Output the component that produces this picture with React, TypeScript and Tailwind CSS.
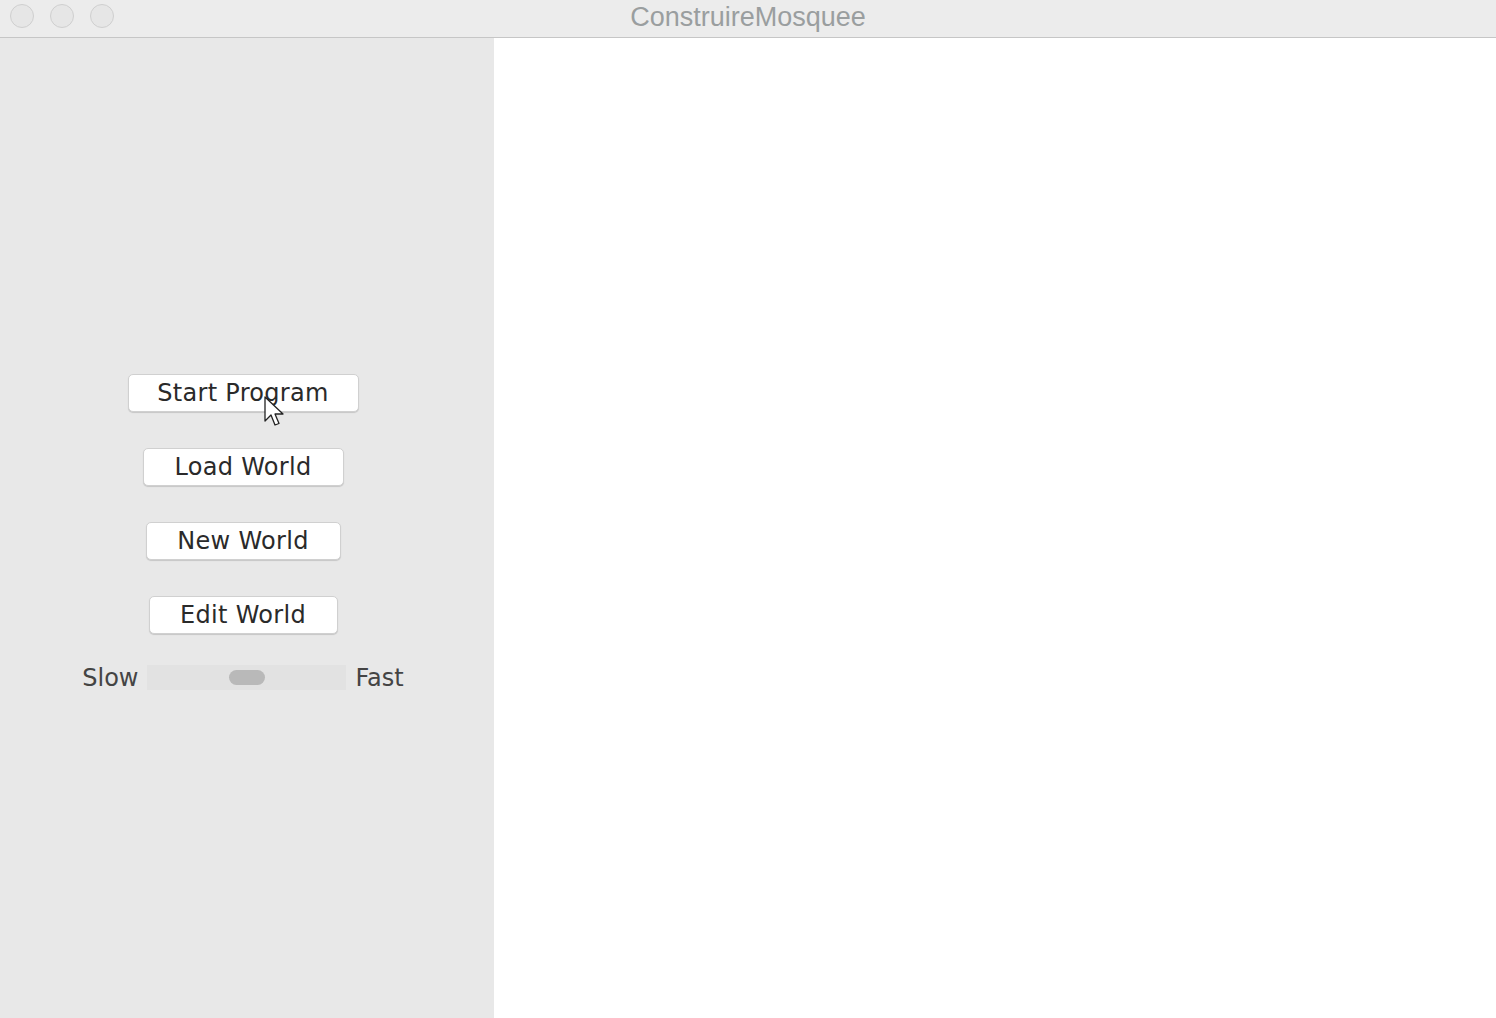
import React from 'react';

const buttons = [
  { label: 'Start Program', width: 'w-[231px]' },
  { label: 'Load World', width: 'w-[201px]' },
  { label: 'New World', width: 'w-[195px]' },
  { label: 'Edit World', width: 'w-[189px]' },
];

function TrafficLight() {
  return <div className="w-[24px] h-[24px] rounded-full bg-[#e6e6e6] border border-[#cfcfcf]" />;
}

export default function App() {
  return (
    <div className="w-[1496px] h-[1018px] flex flex-col bg-white overflow-hidden">
      {/* title bar */}
      <div className="relative h-[38px] shrink-0 flex items-center bg-[#ececec] border-b border-[#c6c6c6]">
        <div className="flex items-center gap-[16px] pl-[10px] pb-[5px]">
          <TrafficLight />
          <TrafficLight />
          <TrafficLight />
        </div>
        <div
          className="absolute inset-0 flex items-center justify-center text-[27px] text-[#9a9e9f] pb-[2px]"
          style={{ fontFamily: '"Liberation Sans", Arial, sans-serif' }}
        >
          ConstruireMosquee
        </div>
      </div>

      <div className="flex flex-1">
        {/* sidebar */}
        <div
          className="relative w-[494px] bg-[#e8e8e8] flex flex-col items-center pt-[336px] pr-[8px]"
          style={{ fontFamily: '"DejaVu Sans", Verdana, sans-serif' }}
        >
          <div className="flex flex-col items-center gap-[36px]">
            {buttons.map((b) => (
              <button
                key={b.label}
                className={`${b.width} h-[38px] bg-white rounded-[5px] border border-[#d0d0d0] shadow-[0_1px_1px_rgba(0,0,0,0.15)] text-[24px] text-[#2a2a2a] flex items-center justify-center leading-none tracking-[0.3px]`}
              >
                {b.label}
              </button>
            ))}
          </div>

          <div className="mt-[31px] flex items-center gap-[9px] text-[24px] text-[#444] leading-none">
            <span>Slow</span>
            <div className="w-[199px] h-[25px] bg-[#e2e2e2] flex items-center justify-center">
              <div className="w-[36px] h-[15px] rounded-full bg-[#b9b9b9]" />
            </div>
            <span>Fast</span>
          </div>

          {/* mouse cursor */}
          <svg
            className="absolute left-[264px] top-[358px]"
            width="22"
            height="36"
            viewBox="0 0 22 36"
          >
            <path
              d="M1 1 L1 25 L7 19 L11 29 L15 27.5 L11 18 L19 18 Z"
              fill="#ffffff"
              stroke="#222"
              strokeWidth="1.3"
              strokeLinejoin="round"
            />
          </svg>
        </div>

        {/* canvas */}
        <div className="flex-1 bg-white" />
      </div>
    </div>
  );
}
